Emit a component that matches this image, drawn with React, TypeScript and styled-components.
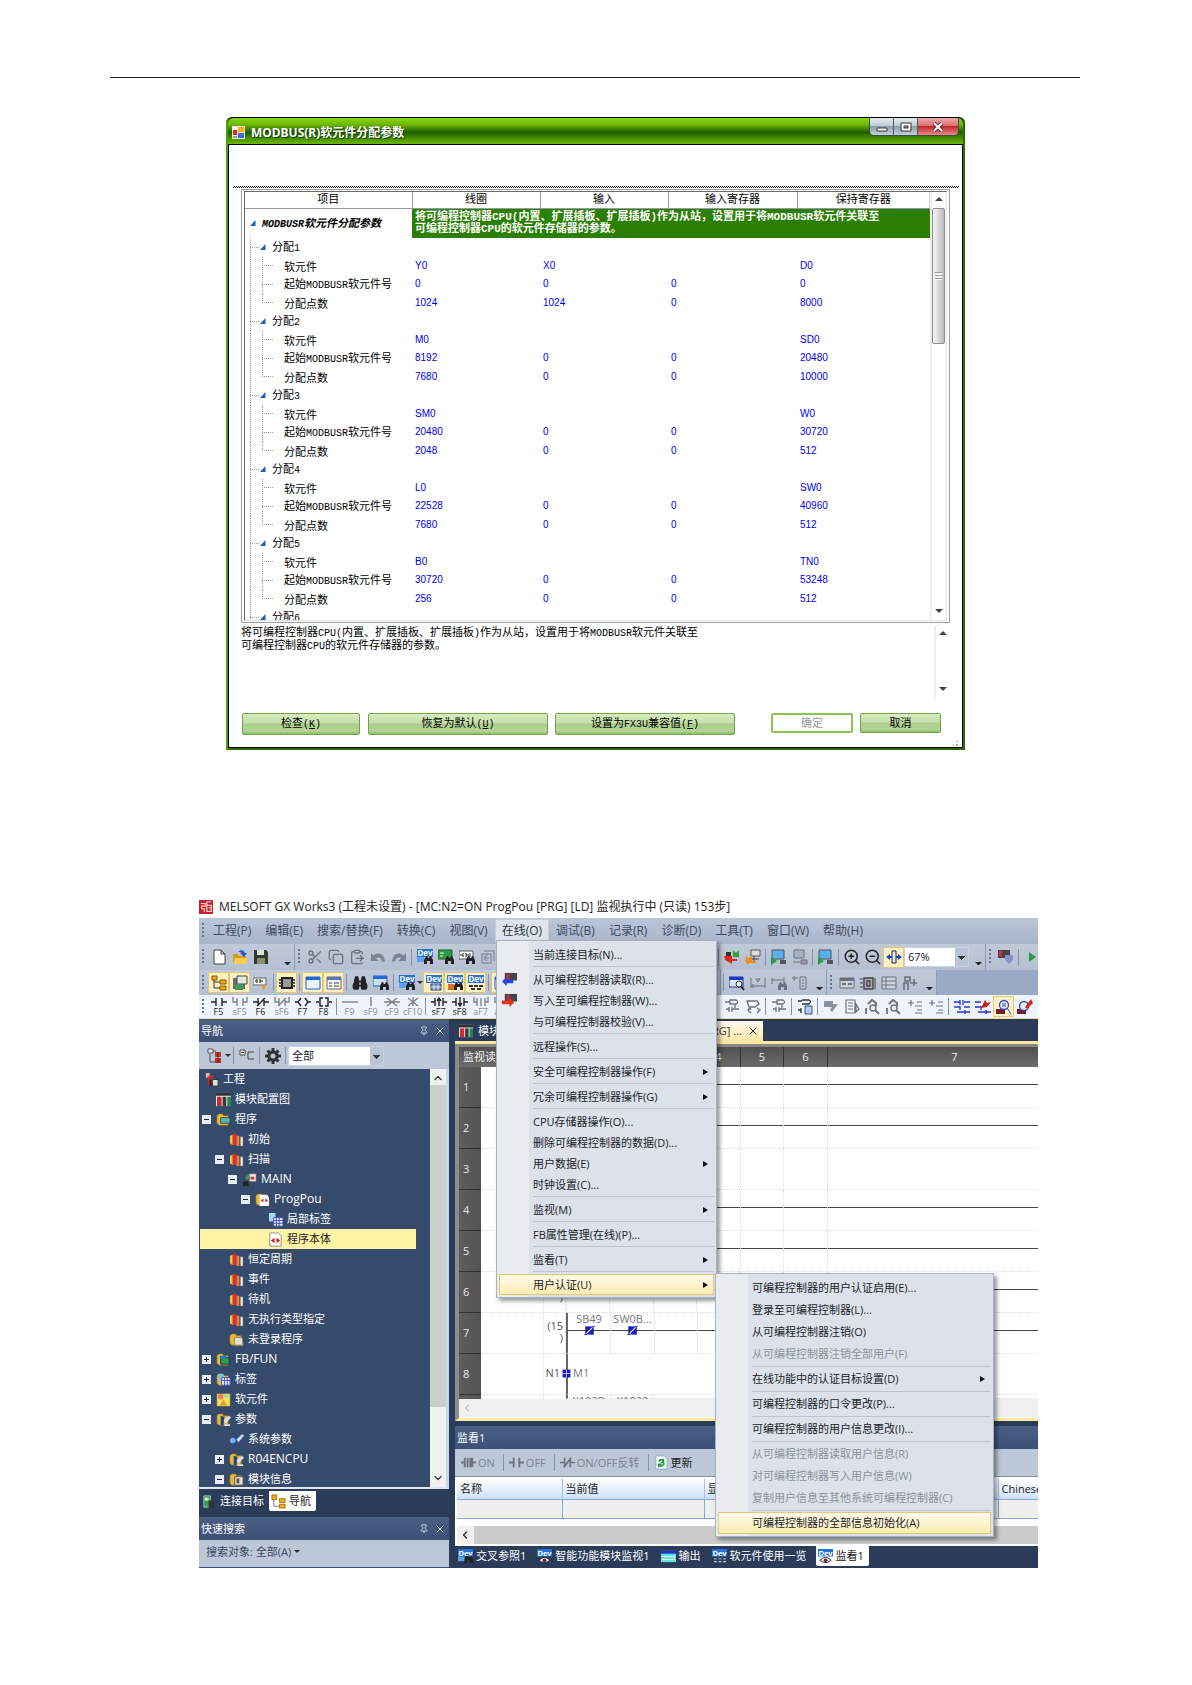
import React from "react";
import styled, { createGlobalStyle, css } from "styled-components";
import { Scissors, Copy, ClipboardPaste, ZoomIn, ZoomOut, Pin, X, Binoculars, ChevronUp, ChevronDown, ChevronLeft } from "lucide-react";

const Global = createGlobalStyle`
  *, *::before, *::after { box-sizing: border-box; }
  body { margin: 0; background: #fff; font-family: "Open Sans", "Noto Sans CJK SC", sans-serif; }
  button, input, select { font: inherit; color: inherit; margin: 0; }
  button { padding: 0; border: 0; background: none; }
  svg { display: block; flex: none; }
`;

const Page = styled.main`
  padding: 77px 112px 116px 110px;
`;
const Rule = styled.hr`
  margin: 0 0 39px;
  border: 0;
  border-top: 1px solid #222;
`;

/* ---------- MODBUS dialog ---------- */

const Dialog = styled.section`
  max-width: 739px;
  margin-left: 116px;
  padding: 1px 2px 2px;
  border-top: 1px solid #000;
  border-radius: 6px 6px 0 0;
  background: linear-gradient(90deg, #4fb400, #2c6a06 4px, #2c6a06);
  font: 11px/12px "Noto Sans CJK SC", sans-serif;
  color: #000;
`;
const TitleBar = styled.header`
  display: flex;
  align-items: center;
  height: 26px;
  margin-top: -1px;
  padding: 3px 0 0 4px;
  border-radius: 6px 6px 0 0;
  background: linear-gradient(#86d610, #6fb80a 25%, #2f7400 48%, #215c00 55%, #4a9404 80%, #6cb80c);
`;
const DialogTitle = styled.h1`
  flex: 1;
  margin: 0 0 0 6px;
  color: #fff;
  font: bold 12px/16px "Noto Sans", "Noto Sans CJK SC", sans-serif;
  text-shadow: 1px 1px 1px #123c00;
`;
const Caption = styled.div`
  display: flex;
  align-self: flex-start;
  height: 18px;
  margin: -3px 4px 0 0;
  border: 1px solid #3a4a4a;
  border-top: 0;
  border-radius: 0 0 5px 5px;
  overflow: hidden;
`;
const CaptionButton = styled.button<{ $close?: boolean }>`
  display: flex;
  align-items: center;
  justify-content: center;
  width: ${(p) => (p.$close ? 40 : 24)}px;
  border-right: ${(p) => (p.$close ? 0 : "1px solid #4a5a5a")};
  background: ${(p) =>
    p.$close
      ? "linear-gradient(#f0a8a8, #e07070 45%, #c02830 50%, #e88888)"
      : "linear-gradient(#e4ecf0, #c0ccd4 45%, #8c9ea8 50%, #c4d0d8)"};
`;
const DialogBody = styled.div`
  border: 1px solid #000;
  background: #fff;
  padding: 41px 3px 0 4px;
`;
const Checker = styled.div`
  height: 2px;
  background: repeating-conic-gradient(#000 0 25%, #fff 0 50%) 0 0 / 2px 2px;
`;
const Frame = styled.div`
  height: 434px;
  margin: 1px 9px 0 8px;
  padding: 1px 2px;
  border: 1px solid #9aa0a4;
`;
const FrameInner = styled.div`
  display: flex;
  height: 100%;
  overflow: hidden;
  border: 1px solid;
  border-color: #666 #e3e3e3 #e3e3e3 #666;
`;
const ParamTable = styled.table`
  flex: 1;
  align-self: flex-start;
  min-width: 0;
  table-layout: fixed;
  border-collapse: collapse;
  th, td { padding: 0; text-align: left; font-weight: normal; }
  thead th { height: 16px; padding-bottom: 3px; text-align: center; border-bottom: 1px solid #999; border-right: 1px solid #999; }
  thead th:last-child { border-right-color: #ddd; }
  td { padding-left: 3px; color: #0000f0; font: 10px/12px "Liberation Sans", sans-serif; }
`;
const Row = styled.tr<{ $h: number }>`
  height: ${(p) => p.$h}px;
`;
const Note = styled.td`
  && {
    height: 29px;
    background: #2b8003;
    color: #fff;
    font: bold 11px/12px "Liberation Mono", "Noto Sans CJK SC", monospace;
    white-space: pre;
  }
`;
const TreeCell = styled.div<{ $h: number }>`
  display: flex;
  align-items: center;
  height: ${(p) => p.$h}px;
  padding-left: 5px;
  white-space: nowrap;
`;
const Guide = styled.span<{ $w: number; $branch?: boolean; $end?: boolean }>`
  align-self: stretch;
  width: ${(p) => p.$w}px;
  margin-right: ${(p) => (p.$w === 11 ? 11 : 0)}px;
  background:
    repeating-linear-gradient(#999 0 1px, transparent 1px 2px) 0 0 / 1px ${(p) => (p.$end ? "50%" : "100%")} no-repeat,
    repeating-linear-gradient(90deg, #999 0 1px, transparent 1px 2px) 0 50% / ${(p) => (p.$branch ? "100%" : "0")} 1px no-repeat;
`;
const Lat = styled.span`
  font-family: "Liberation Mono", monospace;
  font-size: 10px;
  line-height: 1;
`;
const RootLabel = styled.span`
  margin-left: 6px;
  font-weight: bold;
  font-style: italic;
`;
const GroupLabel = styled.span`
  margin-left: 6px;
`;
const VScroll = styled.div`
  display: flex;
  flex-direction: column;
  align-items: center;
  width: 15px;
  margin-right: 1px;
  border-left: 2px solid #eee;
`;
const VArrow = styled.span<{ $up?: boolean }>`
  width: 0;
  border: 4px solid transparent;
  border-${(p) => (p.$up ? "bottom" : "top")}-color: #444;
  border-${(p) => (p.$up ? "top" : "bottom")}-width: 0;
  margin: 5px 0 7px;
`;
const VThumb = styled.span`
  display: flex;
  align-items: center;
  justify-content: center;
  width: 13px;
  height: 136px;
  border: 1px solid #8c8c8c;
  border-radius: 2px;
  background: linear-gradient(90deg, #f6f6f6, #ddd 45%, #b8b8be);
`;
const ThumbGrip = styled.span`
  width: 7px;
  height: 8px;
  background: repeating-linear-gradient(#999 0 1px, #fff 1px 3px);
`;
const Spring = styled.span`
  flex: 1;
`;
const Description = styled.div`
  display: flex;
  justify-content: space-between;
  height: 76px;
  padding: 3px 9px 1px 8px;
  line-height: 11px;
  p { margin: 0; }
`;
const DialogFooter = styled.footer`
  display: flex;
  height: 48px;
  padding: 14px 0 0 9px;
`;
const GreenButton = styled.button<{ $w: number; $short?: boolean; $gap: number }>`
  width: ${(p) => p.$w}px;
  height: ${(p) => (p.$short ? 20 : 22)}px;
  padding-bottom: 3px;
  margin-right: ${(p) => p.$gap}px;
  border: 1px solid #6fa84a;
  border-radius: 2px;
  background: linear-gradient(#d8ecc0, #c4dfaa 45%, #aacd8c 50%, #b4d498 85%, #8cbc68);
  &:disabled { border: 2px solid #8cc450; background: #fff; color: #999; }
`;
const SizeGrip = styled.span`
  align-self: flex-end;
  width: 8px;
  height: 8px;
  margin-left: auto;
  background: radial-gradient(#aaa 1px, transparent 1px) 0 0 / 4px 4px;
  clip-path: polygon(100% 0, 100% 100%, 0 100%);
`;

const groups = [
  ["1", ["Y0", "X0", "", "D0"], ["0", "0", "0", "0"], ["1024", "1024", "0", "8000"]],
  ["2", ["M0", "", "", "SD0"], ["8192", "0", "0", "20480"], ["7680", "0", "0", "10000"]],
  ["3", ["SM0", "", "", "W0"], ["20480", "0", "0", "30720"], ["2048", "0", "0", "512"]],
  ["4", ["L0", "", "", "SW0"], ["22528", "0", "0", "40960"], ["7680", "0", "0", "512"]],
  ["5", ["B0", "", "", "TN0"], ["30720", "0", "0", "53248"], ["256", "0", "0", "512"]],
] as [string, string[], string[], string[]][];
const childLabels = [<>软元件</>, <>起始<Lat>MODBUSR</Lat>软元件号</>, <>分配点数</>];

const Tri = () => (
  <svg width="6" height="6" viewBox="0 0 6 6"><path d="M5.5 0v6H0z" fill="#1d5fc4" /></svg>
);

function GroupRow({ n }: { n: string }) {
  return (
    <Row $h={19}>
      <th scope="rowgroup"><TreeCell $h={19}><Guide $w={10} $branch /><Tri /><GroupLabel>分配<Lat>{n}</Lat></GroupLabel></TreeCell></th>
      <td /><td /><td /><td />
    </Row>
  );
}

function ModbusDialog() {
  return (
    <Dialog aria-label="MODBUS(R)软元件分配参数">
      <TitleBar>
        <svg width="13" height="13" viewBox="0 0 13 13">
          <path d="M0 0h13v13H0z" fill="#e8e4d8" /><path d="M1 1h5v3H1z" fill="#fff" /><path d="M1 4h4v5H1z" fill="#d03020" />
          <path d="M6 1h6v5H6z" fill="#f0b020" /><path d="M6 7h6v5H6z" fill="#3a70d0" /><path d="M1 10h4v2H1z" fill="#999" />
        </svg>
        <DialogTitle>MODBUS(R)软元件分配参数</DialogTitle>
        <Caption>
          <CaptionButton aria-label="最小化"><svg width="12" height="10"><path d="M1 6h10v3H1z" fill="#fff" stroke="#333" /></svg></CaptionButton>
          <CaptionButton aria-label="最大化"><svg width="12" height="10"><path d="M1 1h10v8H1z" fill="#fff" stroke="#333" /><path d="M4 4h4v2H4z" fill="#9ab" stroke="#333" /></svg></CaptionButton>
          <CaptionButton $close aria-label="关闭"><svg width="12" height="10" viewBox="0 0 12 10"><path d="M2 1l8 8M10 1L2 9" stroke="#533" strokeWidth="4" /><path d="M2 1l8 8M10 1L2 9" stroke="#fff" strokeWidth="2" /></svg></CaptionButton>
        </Caption>
      </TitleBar>
      <DialogBody>
        <Checker />
        <Frame>
          <FrameInner>
            <ParamTable>
              <colgroup><col width="167" /><col width="128" /><col width="128" /><col width="129" /><col /></colgroup>
              <thead><tr><th>项目</th><th>线圈</th><th>输入</th><th>输入寄存器</th><th>保持寄存器</th></tr></thead>
              <tbody>
                <tr>
                  <th><TreeCell $h={29}><Tri /><RootLabel><Lat>MODBUSR</Lat>软元件分配参数</RootLabel></TreeCell></th>
                  <Note colSpan={4}>{"将可编程控制器CPU(内置、扩展插板、扩展插板)作为从站，设置用于将MODBUSR软元件关联至\n可编程控制器CPU的软元件存储器的参数。"}</Note>
                </tr>
                {groups.map(([n, ...rows]) => (
                  <React.Fragment key={n}>
                    <GroupRow n={n} />
                    {rows.map((cells, i) => {
                      const h = i === 1 ? 19 : 18;
                      return (
                        <Row key={i} $h={h}>
                          <th scope="row">
                            <TreeCell $h={h}><Guide $w={12} /><Guide $w={11} $branch $end={i === 2} /><span>{childLabels[i]}</span></TreeCell>
                          </th>
                          {cells.map((c, k) => <td key={k}>{c}</td>)}
                        </Row>
                      );
                    })}
                  </React.Fragment>
                ))}
                <GroupRow n="6" />
              </tbody>
            </ParamTable>
            <VScroll><VArrow $up /><VThumb><ThumbGrip /></VThumb><Spring /><VArrow /></VScroll>
          </FrameInner>
        </Frame>
        <Description>
          <p>将可编程控制器<Lat>CPU(</Lat>内置、扩展插板、扩展插板<Lat>)</Lat>作为从站，设置用于将<Lat>MODBUSR</Lat>软元件关联至<br />可编程控制器<Lat>CPU</Lat>的软元件存储器的参数。</p>
          <VScroll><VArrow $up /><Spring /><VArrow /></VScroll>
        </Description>
        <DialogFooter>
          <GreenButton $w={118} $gap={8}>检查<Lat>(<u>K</u>)</Lat></GreenButton>
          <GreenButton $w={180} $gap={7}>恢复为默认<Lat>(<u>U</u>)</Lat></GreenButton>
          <GreenButton $w={180} $gap={36}>设置为<Lat>FX3U</Lat>兼容值<Lat>(<u>F</u>)</Lat></GreenButton>
          <GreenButton $w={82} $gap={7} $short disabled>确定</GreenButton>
          <GreenButton $w={81} $gap={0} $short>取消</GreenButton>
          <SizeGrip />
        </DialogFooter>
      </DialogBody>
    </Dialog>
  );
}

/* ---------- GX Works3 icons ---------- */

const G = "#6c7280";
const DevTag = ({ children, c = "#2474d8" }: { children?: React.ReactNode; c?: string }) => (
  <>
    <path d="M0 0h16v8H0z" fill={c} />
    <text x="8" y="7" textAnchor="middle" fontSize="8" fontWeight="bold" fill="#fff">Dev</text>
    {children}
  </>
);
const Bino = ({ c = "#222" }: { c?: string }) => (
  <path d="M7 15v-4l2-4h1l1 2h1l1-2h1l2 4v4h-3v-3h-3v3z" fill={c} />
);
const Folder = ({ children }: { children?: React.ReactNode }) => (
  <><path d="M1 4l2-2h4l1 2h5v10H3L1 12z" fill="#e8b93c" stroke="#9a7420" strokeWidth=".6" />{children}</>
);

const art: Record<string, React.ReactNode> = {
  app: <><path d="M0 0h16v16H0z" fill="#c8202c" /><path d="M2 4h5v3H3v3h3v4M9 2h5M9 6h5v7H9V2M11 9h2" stroke="#f6dada" strokeWidth="1.3" fill="none" /></>,
  page: <path d="M3 1h7l4 4v10H3zM10 1v4h4" fill="#fff" stroke="#444" />,
  open: <><path d="M1 5h5l1 2h7v7H1z" fill="#d89a18" /><path d="M3 9h13l-2 6H1z" fill="#f8cc50" /><path d="M6 3c3-3 6-2 7 1h2l-3 4-4-4h2c-1-1-2-1-4-1z" fill="#2458c8" /></>,
  save: <><path d="M1 1h12l2 2v12H1z" fill="#333a30" /><path d="M4 1h7v5H4z" fill="#e0e4d8" /><path d="M4 9h8v6H4z" fill="#888e70" /></>,
  undo: <path d="M1 4v8h8L6 9.500q4-3 6 3l3 0q-1-9-8-8-2 .4-3.500 2z" fill="#7c8494" />,
  redo: <path d="M15 4v8H7l3-2.500q-4-3-6 3l-3 0q1-9 8-8 2 .4 3.500 2z" fill="#7c8494" />,
  gear: (
    <>
      <path d="M8 0v16M0 8h16M2.500 2.500l11 11M13.500 2.500l-11 11" stroke="#333" strokeWidth="3" />
      <circle cx="8" cy="8" r="4" fill="#bcc7d8" stroke="#333" strokeWidth="3" />
    </>
  ),
  devfind: <DevTag><path d="M0 8h7v5H0z" fill="#5aa4f0" /><Bino /></DevTag>,
  greenfind: <><path d="M0 1h14v9H0z" fill="#2e9c44" stroke="#185c28" /><path d="M2 4h4M2 7h3" stroke="#dfd" /><Bino /></>,
  ladfind: <><path d="M0 2h14v8H0z" fill="#fff" stroke="#555" /><path d="M1 6h3M4 4v4M7 4v4M7 6h3M11 4v4" stroke="#222" /><Bino /></>,
  greyback: <path d="M4 2h10v10M2 5h9v9H2zM4 9h5M4 9l3-3M4 9l3 3" fill="none" stroke="#8c94a4" strokeWidth="1.5" />,
  swap: <><path d="M0 7h8v3l5-0v2H8v3L1 11z" fill="#e02818" /><path d="M2 3h5v4H2z" fill="#333" /><path d="M9 1l3 3 3-3v7H9z" fill="#30a830" /></>,
  orange: <><path d="M6 1h9v6H6z" fill="#d8dce4" stroke="#555" /><path d="M7 10h7M9 7v6" stroke="#444" /><path d="M1 7l2 2 4-2v5l4 0v2H4l-1 2-3-4z" fill="#f09020" /></>,
  monplay: <><path d="M1 1h12v9H1z" fill="#58b0f0" stroke="#555" /><path d="M0 8l6 4-6 4z" fill="#20a040" /><path d="M9 11h6v4H9z" fill="#555" /></>,
  mongrey: <><path d="M2 1h10v8H2z" fill="#aab2c0" stroke={G} /><path d="M1 13h7M9 11h6v4H9z" stroke={G} fill="#99a" /></>,
  fit: <><path d="M6 2h4v12H6z" fill="#e8ecf4" stroke="#222" /><path d="M0 8l4-3v2h2v2H4v2zM16 8l-4-3v2h-2v2h2v2z" fill="#1848c8" /></>,
  plc: <><path d="M0 1h12v8H0z" fill="#444" /><path d="M1 2h3v6H1z" fill="#d02840" /><path d="M7 6h8v5l-4 4-4-4z" fill="#8890d0" /></>,
  play: <path d="M5 3l7 5-7 5z" fill="#2c9a3c" />,
  treeico: <><path d="M1 1h5v4H1zM9 5h6v4H9zM9 11h6v4H9z" fill="#f0a818" stroke="#8a5a08" /><path d="M3 5v8h6M3 7h6" fill="none" stroke="#333" /></>,
  disk2: <><path d="M1 3h12v11H1z" fill="#667068" /><path d="M5 1h10v8H5z" fill="#e0e8e0" stroke="#444" /><path d="M3 9h8v6H3z" fill="#40985a" /></>,
  cards: <><path d="M0 3h13v7H0z" fill="#f2f2e8" stroke="#666" /><path d="M2 6h2M4 4v4M7 4v4M7 6h3" stroke="#222" /><path d="M8 9l5 3-3 3z" fill="#d8a020" /></>,
  chip: <><path d="M3 3h10v10H3z" fill="#999" stroke="#222" strokeWidth="2" /><path d="M0 5h3M0 8h3M0 11h3M13 5h3M13 8h3M13 11h3" stroke="#222" strokeWidth="1.4" /></>,
  win: <><path d="M1 2h14v12H1z" fill="#e8f4ff" stroke="#2060c0" /><path d="M1 2h14v3H1z" fill="#2468d8" /></>,
  win2: <><path d="M1 2h14v12H1z" fill="#f4f4f4" stroke="#666" /><path d="M1 2h14v3H1z" fill="#5a78b8" /><path d="M3 8h3M8 8h5M3 11h3M8 11h5" stroke="#445" /></>,
  winfind: <><path d="M0 1h14v10H0z" fill="#cde" stroke="#35a" /><path d="M0 1h14v3H0z" fill="#2468d8" /><Bino /></>,
  devgrid: <DevTag><path d="M5 9h10v6H5z" fill="#7898c8" stroke="#345" /><path d="M8 9v6M12 9v6M5 12h10" stroke="#fff" strokeWidth=".7" /></DevTag>,
  devred: <DevTag><path d="M1 9h6v6H1z" fill="#e07020" /><Bino /></DevTag>,
  devblk: <DevTag><path d="M1 10h4v2H1zM6 10h4v2H6zM11 10h4v2h-4zM3 13h4v2H3zM9 13h4v2H9z" fill="#333" /></DevTag>,
  deveye: <DevTag><path d="M2 12q6-6 12 0q-6 5-12 0z" fill="#fff" stroke="#222" /><circle cx="8" cy="12" r="2" fill="#722" /></DevTag>,
  devdots: <DevTag><path d="M2 10h3v1H2zM7 10h3v1H7zM12 10h3v1h-3zM2 13h3v1H2zM7 13h3v1H7zM12 13h3v1h-3z" fill="#eee" /></DevTag>,
  bluesearch: <><path d="M0 2h14v10H0z" fill="#dde6f8" stroke="#1830b0" /><path d="M0 2h14v3H0z" fill="#1838d0" /><circle cx="10" cy="9" r="3" fill="#fff" stroke="#222" /><path d="M12 11l3 4" stroke="#222" strokeWidth="2" /></>,
  g1: <path d="M1 3v10M15 3v10M1 11h14M6 4h4l-2 3zM3 9v4" fill="none" stroke={G} />,
  g2: <><path d="M1 3v6M13 2v6M1 5h12" fill="none" stroke={G} /><Bino c={G} /></>,
  g3: <path d="M0 3h6M2 1v5M8 2h6v12H8zM10 5h2M10 8h2M10 11h2" fill="none" stroke={G} />,
  g4: <><path d="M1 3h14v10H1z" fill="#ccd2dc" stroke={G} /><path d="M1 3h14v3H1zM3 8h4v2H3zM9 8h4v2H9z" fill={G} /></>,
  g5: <><path d="M0 4h3M0 8h3M0 12h3M15 3v11" fill="none" stroke="#444" /><path d="M4 3h9v11H4zM7 6h3v5H7z" fill="#aab" stroke="#444" strokeWidth="1.4" /></>,
  g6: <path d="M1 2h14v12H1zM1 6h14M1 10h14M5 2v12" fill="#ccd2dc" stroke={G} />,
  g7: <path d="M3 2h5v4H3zM2 15V8h4v7M8 8h7M12 4v7" fill="none" stroke={G} strokeWidth="1.6" />,
  l1: <path d="M1 3h5M6 1h6q3 2 0 4H6zM2 10h3M5 8v5M8 8v5M8 10h7M11 6v3" fill="none" stroke={G} strokeWidth="1.3" />,
  l2: <path d="M2 2h10l2 3-4 3H4zM3 10h3M12 9l3 2-3 3M6 9l-3 2 3 3" fill="none" stroke={G} strokeWidth="1.3" />,
  l3: <><path d="M1 2h4M5 1h7q3 1 0 4H5M1 11h3M4 9v5" fill="none" stroke="#333" strokeWidth="1.3" /><path d="M8 7h7v8H8z" fill="#b8c8e8" stroke="#357" /></>,
  l4: <path d="M1 2h9v3h5l-6 8-2-2 2-3H1z" fill="#8a90a0" />,
  l5: <path d="M2 1h9v13H2zM4 4h5M4 7h5M4 10h5M12 5v8l3-3z" fill="none" stroke={G} strokeWidth="1.2" />,
  l6: <><path d="M3 5l4-4 4 3v3" fill="none" stroke={G} strokeWidth="2" /><circle cx="8" cy="9" r="3" fill="none" stroke={G} strokeWidth="1.5" /><path d="M10 11l4 4M1 9v6" stroke={G} strokeWidth="1.8" /></>,
  l7: <path d="M4 1v6M1 4h6M10 3h5M8 7h7M10 11h5M8 14h7" fill="none" stroke={G} strokeWidth="1.2" />,
  b1: <path d="M0 3h6M0 8h6M10 3h6M6 1v5M9 1v5M6 7v4M10 8h6M3 13h5M11 11v4M8 13h8" fill="none" stroke="#2038d8" strokeWidth="1.3" />,
  b2: <><path d="M0 3h6M0 8h6M3 13h5M11 11v4M8 13h8M6 7v4" fill="none" stroke="#2038d8" strokeWidth="1.3" /><path d="M6 9l4-8 2 3 4-1-4 5z" fill="#c02818" /></>,
  b3: <><path d="M0 10h9v5H0z" fill="#702020" /><circle cx="8" cy="6" r="4.5" fill="#e4ecff" stroke="#3448c0" strokeWidth="1.3" /><path d="M11 9l4 6M6 5h4M6 7h4" stroke="#3448c0" /></>,
  b4: <><path d="M0 10h9v5H0z" fill="#702020" /><circle cx="7" cy="7" r="4.5" fill="#e4ecff" stroke="#3448c0" strokeWidth="1.3" /><path d="M8 8l6-8 2 4-6 6z" fill="#d02818" /></>,
  filt: <><path d="M1 1h5v4H1z" fill="#eee" stroke="#555" /><path d="M3 6v8h5M6 3h3" stroke="#555" fill="none" /><path d="M8 4h6v5H8zM8 10h6v5H8z" fill="#c83020" /><path d="M11 4v11" stroke="#333" /></>,
  coll: <><path d="M1 2h5v5H1z" fill="#fff" stroke="#444" /><path d="M2 4.500h3M15 4H9v7h6" stroke="#444" fill="none" /></>,
  proj: <><path d="M2 1h4v5H2z" fill="#e4b0a0" /><path d="M4 5l6-2v9l-6 2z" fill="#b83030" /><path d="M9 8h6v7H9z" fill="#ddd" stroke="#333" /><path d="M6 8h2v7H6z" fill="#222" /></>,
  module: <><path d="M0 1h16v14H0z" fill="#eee" /><path d="M0 1h16v3H0z" fill="#333" /><path d="M1 5h5v10H1z" fill="#c82c38" /><path d="M7 5h4v10H7z" fill="#3a3a3a" /><path d="M12 5h4v10h-4z" fill="#208848" /></>,
  prog: <Folder><path d="M5 6h10v6H5z" fill="#58b8b0" stroke="#234" strokeWidth=".8" /></Folder>,
  books: <><path d="M1 4l3-1v11l-3-2z" fill="#f0c040" /><path d="M4 2h4v12H4z" fill="#d83028" /><path d="M8 4h3v11H8z" fill="#f08040" /><path d="M12 5h3v10h-3z" fill="#f4f0e8" stroke="#555" strokeWidth=".6" /></>,
  main: <><path d="M1 10h6v5H1z" fill="#222" /><path d="M3 6l4-4 2 3-3 4z" fill="#2c9c58" /><path d="M8 2h7v8H8z" fill="#f6eaea" stroke="#876" strokeWidth=".6" /><path d="M9 5h4v3H9z" fill="#d03030" /></>,
  pou: <Folder><path d="M5 3h8l2 3v9H5z" fill="#fff" /><path d="M6 9l3-2v4zM14 9l-3-2v4z" fill="#d02020" /></Folder>,
  label: <><path d="M1 1h7v9H1z" fill="#a8d8f0" /><path d="M6 6h10v9H6z" fill="#f0f0ff" stroke="#3c50c8" /><path d="M6 9h10M6 12h10M9 6v9M12 6v9" stroke="#3c50c8" /></>,
  body: <><path d="M2 1h9l3 3v11H2z" fill="#fff" stroke="#666" strokeWidth=".7" /><path d="M3 9l4-3v6zM13 9l-4-3v6z" fill="#d02020" /></>,
  unreg: <Folder><path d="M6 6h8l1 8H6z" fill="#e8e4c8" stroke="#887" /></Folder>,
  fb: <Folder><path d="M5 6h9v7H5z" fill="#28a048" stroke="#135" /><path d="M4 4h7v3H4z" fill="#2c70d0" /></Folder>,
  labels: <Folder><path d="M2 2h6v7H2z" fill="#7cc4e8" /><path d="M6 6h9v8H6z" fill="#eef" stroke="#3c50c8" /><path d="M6 9h9M9 6v8M12 6v8" stroke="#3c50c8" /></Folder>,
  device: <><path d="M1 2h14v13H1z" fill="#f4e060" stroke="#a08020" strokeWidth=".6" /><circle cx="5" cy="5" r="3" fill="#e88068" /><circle cx="11" cy="4" r="2.5" fill="#b0d890" /><path d="M4 14l4-6 4 6z" fill="#e0a030" /></>,
  param: <Folder><path d="M5 4l4 1-1 9H5z" fill="#1c4880" /><path d="M8 9l6-5 2 2-6 6zM9 13h6v2H9z" fill="#d8e0f0" /></Folder>,
  sysparam: <><path d="M5 3l5 2-2 10H4z" fill="#204a90" /><path d="M8 8l6-6 2 2-6 7z" fill="#c8d8f8" /><circle cx="4" cy="9" r="3" fill="#7ab0e8" /></>,
  modinfo: <Folder><path d="M6 5h9v9H6z" fill="#e4dccc" stroke="#554" /><path d="M8 7h3v5H8z" fill="#555" /></Folder>,
  conn: <><path d="M2 2h7v12H2z" fill="#389858" stroke="#9cb" /><path d="M7 7h6v8H7z" fill="#333" /><path d="M3 4h4v3H3z" fill="#dfd" /></>,
  navtree: <><path d="M1 1h5v5H1zM9 5h6v4H9zM9 11h6v4H9z" fill="#f0b020" stroke="#a87408" /><path d="M3 6v7h6" fill="none" stroke="#777" /></>,
  mread: <><path d="M3 1h13v8H3z" fill="#444" /><path d="M5 2h3v6H5z" fill="#c03040" /><path d="M0 10l5-5v3h7v4H5v3z" fill="#2048e0" /></>,
  mwrite: <><path d="M3 1h13v8H3z" fill="#444" /><path d="M5 2h3v6H5z" fill="#c03040" /><path d="M13 10L8 5v3H0v4h8v3z" fill="#e83020" /></>,
  con: <path d="M0 8h3M13 8h3M4 3v10M7 3v10M10 3v10M12 3v10" stroke={G} strokeWidth="2" />,
  coff: <path d="M0 8h5M11 8h5M5 3v10M11 3v10" stroke={G} strokeWidth="2" />,
  cinv: <path d="M0 8h4M12 8h4M5 3v10M11 3v10M4 13L12 3" stroke={G} strokeWidth="1.8" />,
  refresh: <><path d="M2 1h9l3 3v11H2z" fill="#fff" stroke="#8ac" /><path d="M5 7q3-4 5 0M11 9q-3 5-6 1M10 4v4H7M5 13v-3h3" fill="none" stroke="#18a038" strokeWidth="1.8" /></>,
  output: <><path d="M0 2h16v12H0z" fill="#68e0e0" /><path d="M0 2h16v3H0z" fill="#2030c8" /><path d="M1 8h14M1 11h14" stroke="#fff" /></>,
  contact: <><path d="M2 2h12v12H2z" fill="#1818d0" /><path d="M3 13L13 3" stroke="#fff" strokeWidth="1.6" /><path d="M0 14h4M12 2h4M3 2v12M13 2v12" stroke="#223" /></>,
  coilbox: <><path d="M1 1h14v14H1z" fill="#1818c8" /><path d="M8 1v14M1 8h14" stroke="#dde" strokeWidth="1.4" /></>,
};
const Icon = ({ n, s = 15 }: { n: string; s?: number }) => (
  <svg width={s} height={s} viewBox="0 0 16 16" aria-hidden="true">{art[n]}</svg>
);

/* Ladder instruction symbols, 16x9 */
const lad: Record<string, string> = {
  no: "M0 5h5M11 5h5M5 1v8M11 1v8",
  or: "M1 0v5h4M15 0v5h-4M5 1v8M11 1v8",
  nc: "M0 5h5M11 5h5M5 1v8M11 1v8M4 9l8-8",
  ornc: "M1 0v5h4M15 0v5h-4M5 1v8M11 1v8M4 9l8-8",
  coil: "M0 5h3M13 5h3M6 1L3 5l3 4M10 1l3 4-3 4",
  app: "M0 5h3M13 5h3M7 1H4v8h3M9 1h3v8H9",
  h: "M0 5h16",
  v: "M8 0v9",
  xh: "M0 5h16M3 1l10 8M13 1L3 9",
  xv: "M8 0v9M3 1l10 8M13 1L3 9",
  up: "M0 5h4M12 5h4M4 1v8M12 1v8M8 9V1M6 4l2-3 2 3",
  dn: "M0 5h4M12 5h4M4 1v8M12 1v8M8 0v8M6 6l2 3 2-3",
  orup: "M1 0v5h3M15 0v5h-3M4 1v8M12 1v8M8 9V1",
};

/* ---------- GX Works3 window ---------- */

const Works = styled.section`
  position: relative;
  max-width: 839px;
  margin: 145px 0 0 89px;
  overflow: hidden;
  font-size: 11px;
  line-height: 16px;
  color: #1b2333;
  white-space: nowrap;
`;
const WorksTitle = styled.header`
  display: flex;
  align-items: center;
  gap: 6px;
  height: 23px;
  padding-top: 1px;
  font-size: 12px;
  color: #222;
`;
const MenuBar = styled.nav`
  display: flex;
  align-items: center;
  height: 26px;
  padding: 2px 0;
  background: linear-gradient(#bcc6d8, #a8b4ca);
  font-size: 12px;
  color: #3f4a60;
`;
const MenuBarItem = styled.button<{ $open?: boolean }>`
  height: 24px;
  padding: 0 7px;
  ${(p) => p.$open && css`background: #dfe4ec; box-shadow: inset 0 0 0 1px #c6cede; color: #2a3242;`}
`;
const Grip = styled.span`
  flex: none;
  width: 2px;
  height: 16px;
  margin: 0 4px 0 3px;
  background: repeating-linear-gradient(#66728a 0 2px, transparent 2px 4px);
`;
const MenuGrip = styled(Grip)`
  margin-right: 2px;
`;
const ToolRow = styled.div<{ $h: number; $light?: boolean }>`
  display: flex;
  height: ${(p) => p.$h}px;
  background: ${(p) => (p.$light ? "#eff3fc" : "#9baac4")};
  border-bottom: ${(p) => (p.$light ? "1px solid #e8dcae" : "0")};
`;
const ToolGroup = styled.div<{ $w?: number; $light?: boolean }>`
  display: flex;
  flex: none;
  align-items: center;
  ${(p) => p.$w && css`width: ${p.$w}px;`}
  background: ${(p) => (p.$light ? "none" : "linear-gradient(#c0cad9, #b4bfd1)")};
  border-right: ${(p) => (p.$light ? 0 : 1)}px solid #8e9cb6;
  overflow: hidden;
`;
const Tool = styled.button<{ $on?: boolean }>`
  display: flex;
  flex: none;
  flex-direction: column;
  align-items: center;
  justify-content: center;
  width: 21px;
  height: 21px;
  color: ${G};
  ${(p) => p.$on && css`background: #fdf0c4; box-shadow: inset 0 0 0 1px #e4c878;`}
`;
const KeyTool = styled(Tool)<{ $dim?: boolean }>`
  height: 23px;
  font-size: 9px;
  line-height: 10px;
  color: ${(p) => (p.$dim ? "#8a90a0" : "#222")};
`;
const Sep = styled.span`
  flex: none;
  width: 1px;
  height: 17px;
  margin: 0 2px;
  background: #8592aa;
`;
const More = styled.span`
  align-self: flex-end;
  width: 7px;
  margin: 0 3px 5px 6px;
  border: 3px solid transparent;
  border-top-color: #222;
  border-bottom: 0;
`;
const Combo = styled.select<{ $w: number }>`
  appearance: none;
  width: ${(p) => p.$w}px;
  height: 20px;
  padding: 0 3px;
  border: 1px solid #c8d0e0;
  border-radius: 0;
  background:
    linear-gradient(#333, #333) right 3px top 8px / 7px 1px no-repeat,
    linear-gradient(#333, #333) right 4px top 9px / 5px 1px no-repeat,
    linear-gradient(#333, #333) right 5px top 10px / 3px 1px no-repeat,
    linear-gradient(#333, #333) right 6px top 11px / 1px 1px no-repeat,
    linear-gradient(#b8c4d8, #b8c4d8) right / 13px 100% no-repeat,
    #fff;
`;
const Docks = styled.div`
  display: grid;
  grid-template-columns: 250px minmax(0, 1fr);
  column-gap: 6px;
  height: 549px;
  background: #2b3c5b;
`;
const Column = styled.div`
  display: flex;
  flex-direction: column;
  min-width: 0;
`;
const PanelHead = styled.header`
  display: flex;
  flex: none;
  align-items: center;
  gap: 5px;
  height: 23px;
  padding: 0 3px 0 2px;
  background: linear-gradient(#4c6084, #3c5078);
  color: #fff;
  svg { color: #dde4f0; }
`;
const PanelTitle = styled.h2`
  flex: 1;
  margin: 0;
  font-size: 11px;
  font-weight: normal;
`;
const PanelTools = styled.div`
  display: flex;
  flex: none;
  align-items: center;
  height: 27px;
  padding-left: 5px;
  background: #bcc7d8;
`;
const TreeBox = styled.div`
  display: flex;
  flex: none;
  height: 420px;
  padding-left: 1px;
  border-right: 3px solid #c4d8f4;
  border-bottom: 2px solid #dce6f6;
  background: #364b6c;
  overflow: hidden;
`;
const TreeList = styled.ul`
  flex: 1;
  margin: 0 14px 0 0;
  padding: 0;
  list-style: none;
  color: #fff;
`;
const TreeItem = styled.li<{ $level: number; $sel?: boolean }>`
  display: flex;
  align-items: center;
  height: 20px;
  padding-left: ${(p) => (p.$level ? p.$level * 13 - 11 : 4)}px;
  ${(p) => p.$sel && css`background: #fff3a4; color: #222;`}
`;
const Expander = styled.span<{ $show: boolean }>`
  display: flex;
  width: 9px;
  height: 9px;
  margin-right: 5px;
  visibility: ${(p) => (p.$show ? "visible" : "hidden")};
`;
const NodeText = styled.span<{ $latin?: boolean }>`
  margin-left: 4px;
  font-size: ${(p) => (p.$latin ? 12 : 11)}px;
`;
const SideScroll = styled.div`
  display: flex;
  flex-direction: column;
  justify-content: space-between;
  width: 16px;
  background: linear-gradient(#f0f0f0 16px, #cdcdcd 16px, #cdcdcd 338px, #f0f0f0 338px);
  color: #444;
  padding: 3px 2px;
`;
const TabStrip = styled.div`
  display: flex;
  flex: none;
  height: 28px;
  padding: 2px 0 5px 1px;
`;
const Tab = styled.button<{ $active?: boolean }>`
  display: flex;
  align-items: center;
  gap: 3px;
  height: 20px;
  padding: 0 5px 0 2px;
  color: ${(p) => (p.$active ? "#222" : "#fff")};
  background: ${(p) => (p.$active ? "#fff" : "none")};
  border-radius: 0 0 2px 2px;
`;
const SearchTarget = styled.button`
  flex: 1;
  display: flex;
  align-items: center;
  gap: 3px;
  padding: 0 7px 4px;
  background: #bcc7d8;
  border-bottom: 1px solid #3c5078;
  color: #3c4860;
`;
const Caret = styled.span`
  border: 3px solid transparent;
  border-top-color: #333;
  border-bottom: 0;
`;
const DocTabs = styled.div`
  display: flex;
  flex: none;
  height: 25px;
  padding-top: 2px;
  border-bottom: 3px solid #fbe6a2;
`;
const DocTab = styled.button<{ $active?: boolean; $w: number }>`
  display: flex;
  align-items: center;
  justify-content: ${(p) => (p.$active ? "flex-end" : "flex-start")};
  gap: 5px;
  width: ${(p) => p.$w}px;
  padding: 0 4px;
  overflow: hidden;
  color: ${(p) => (p.$active ? "#333" : "#fff")};
  background: ${(p) => (p.$active ? "linear-gradient(#fffaf0, #fbe8a8)" : "none")};
`;
const Editor = styled.div`
  flex: none;
  height: 377px;
  padding: 3px 0 0;
  border-left: 4px solid #8c8c8c;
  border-bottom: 3px solid #fbe6a2;
  background: #fff;
  display: flex;
  flex-direction: column;
  box-shadow: inset 0 3px #8a8880;
`;
const GridHead = styled.div`
  display: flex;
  flex: none;
  height: 20px;
  line-height: 20px;
  background: linear-gradient(#505050, #6c6c6c);
  color: #f0f0f0;
`;
const HeadCell = styled.span<{ $w: number; $start?: boolean }>`
  flex: none;
  width: ${(p) => p.$w}px;
  padding-left: ${(p) => (p.$start ? 4 : 0)}px;
  border-right: 1px solid #333;
  text-align: ${(p) => (p.$start ? "left" : "center")};
`;
const LadderRow = styled.div<{ $part?: boolean }>`
  display: flex;
  flex: none;
  height: ${(p) => (p.$part ? 4 : 41)}px;
  overflow: hidden;
`;
const RowNo = styled.span`
  flex: none;
  width: 22px;
  padding: 12px 0 0 4px;
  border-bottom: 1px solid #333;
  background: linear-gradient(90deg, #5c5c5c, #555);
  color: #e8e8e8;
`;
const StepCell = styled.span<{ $w: number; $mid?: boolean }>`
  flex: none;
  width: ${(p) => p.$w}px;
  padding: ${(p) => (p.$mid ? 13 : 7)}px ${(p) => (p.$mid ? 6 : 2)}px 0 0;
  border-right: 1px ${(p) => (p.$mid ? "none" : "dotted")} #ddd;
  border-bottom: 1px dotted #ddd;
  line-height: 12px;
  text-align: right;
  direction: ltr;
  color: #555;
`;
const Rung = styled.div<{ $line?: boolean; $rail?: boolean }>`
  display: flex;
  flex: 1;
  border-left: ${(p) => (p.$rail ? "2px solid #666" : "1px dotted #ddd")};
  border-bottom: 1px dotted #ddd;
  ${(p) => p.$line && css`background: linear-gradient(#444, #444) 0 17px / 100% 1px no-repeat;`}
`;
const Cell = styled.span`
  display: flex;
  flex: none;
  flex-direction: column;
  align-items: center;
  width: 44px;
  border-right: 1px dotted #ddd;
  line-height: 12px;
  color: #777;
  &:nth-child(odd) { width: 43px; }
`;
const Coil = styled.span`
  display: flex;
  align-items: center;
  gap: 2px;
  height: 38px;
  margin-left: -6px;
  color: #777;
`;
const HScroll = styled.div<{ $thumb?: boolean }>`
  display: flex;
  flex: none;
  align-items: center;
  height: 18px;
  padding-left: 2px;
  color: ${(p) => (p.$thumb ? "#333" : "#aaa")};
  background: ${(p) => (p.$thumb ? "linear-gradient(90deg, #f0f0f0 17px, #cbcbcb 17px)" : "#f0f0f0")};
`;
const WatchTool = styled.button<{ $on?: boolean }>`
  display: flex;
  align-items: center;
  gap: 2px;
  padding: 0 6px 0 3px;
  color: ${(p) => (p.$on ? "#222" : "#7c8494")};
`;
const WatchTools = styled(PanelTools)`
  padding-left: 3px;
`;
const WatchBox = styled.div`
  height: 70px;
  padding: 2px 0 0 2px;
  background: #fff;
  border-top: 1px solid #8890a0;
  border-bottom: 2px solid #fff;
  overflow: hidden;
`;
const WatchTable = styled.table`
  width: 750px;
  margin-bottom: 7px;
  table-layout: fixed;
  border-collapse: collapse;
  th { height: 20px; padding: 0 3px; text-align: left; font-weight: normal; background: linear-gradient(#fff, #cde0fa); border-right: 1px solid #a8c0e8; border-bottom: 1px solid #88a8d8; color: #222; }
  td { height: 19px; background: #efefef; border-right: 1px solid #88a8d8; border-bottom: 1px solid #88a8d8; }
`;
const BottomTabs = styled.div`
  display: flex;
  flex: 1;
  align-items: flex-start;
  gap: 4px;
  padding: 0 0 0 1px;
`;

const Menu = styled.ul<{ $x: number; $y: number; $w: number }>`
  position: absolute;
  left: ${(p) => p.$x}px;
  top: ${(p) => p.$y}px;
  width: ${(p) => p.$w}px;
  margin: 0;
  padding: 3px 2px 2px;
  list-style: none;
  border: 1px solid #a8b2c4;
  background: linear-gradient(90deg, #e8ecef 32px, #dce1ea 32px);
  box-shadow: 3px 3px 4px rgba(0, 0, 0, 0.4);
  color: #1a1e28;
`;
const MenuLine = styled.li<{ $loose: boolean }>`
  height: 1px;
  margin: 1px 0 ${(p) => (p.$loose ? 2 : 1)}px 34px;
  background: #bcc4d2;
`;
const MenuEntry = styled.button<{ $h: number; $hot?: boolean }>`
  display: flex;
  align-items: center;
  width: 100%;
  height: ${(p) => p.$h}px;
  padding: 0 6px 0 3px;
  text-align: left;
  &:disabled { color: #8c929c; }
  ${(p) => p.$hot && css`background: linear-gradient(#fffaf0, #fdebb0); box-shadow: inset 0 0 0 1px #e4c878;`}
`;
const MenuIcon = styled.span`
  width: 31px;
`;
const SubArrow = styled.span`
  margin-left: auto;
  border: 3px solid transparent;
  border-left: 5px solid #111;
  border-right: 0;
`;

type Entry = { t: string; icon?: string; sub?: boolean; off?: boolean; hot?: boolean } | null;
const onlineMenu: Entry[] = [
  { t: "当前连接目标(N)..." }, null,
  { t: "从可编程控制器读取(R)...", icon: "mread" }, { t: "写入至可编程控制器(W)...", icon: "mwrite" }, { t: "与可编程控制器校验(V)..." }, null,
  { t: "远程操作(S)..." }, null,
  { t: "安全可编程控制器操作(F)", sub: true }, null,
  { t: "冗余可编程控制器操作(G)", sub: true }, null,
  { t: "CPU存储器操作(O)..." }, { t: "删除可编程控制器的数据(D)..." }, { t: "用户数据(E)", sub: true }, { t: "时钟设置(C)..." }, null,
  { t: "监视(M)", sub: true }, null,
  { t: "FB属性管理(在线)(P)..." }, null,
  { t: "监看(T)", sub: true }, null,
  { t: "用户认证(U)", sub: true, hot: true },
];
const authMenu: Entry[] = [
  { t: "可编程控制器的用户认证启用(E)..." }, { t: "登录至可编程控制器(L)..." }, { t: "从可编程控制器注销(O)" }, { t: "从可编程控制器注销全部用户(F)", off: true }, null,
  { t: "在线功能中的认证目标设置(D)", sub: true }, null,
  { t: "可编程控制器的口令更改(P)..." }, null,
  { t: "可编程控制器的用户信息更改(I)..." }, null,
  { t: "从可编程控制器读取用户信息(R)", off: true }, { t: "对可编程控制器写入用户信息(W)", off: true }, { t: "复制用户信息至其他系统可编程控制器(C)", off: true }, null,
  { t: "可编程控制器的全部信息初始化(A)", hot: true },
];

function PopupMenu({ items, x, y, w, rowH }: { items: Entry[]; x: number; y: number; w: number; rowH: number }) {
  return (
    <Menu $x={x} $y={y} $w={w}>
      {items.map((e, i) =>
        e ? (
          <li key={i}>
            <MenuEntry $h={rowH} $hot={e.hot} disabled={e.off}>
              <MenuIcon>{e.icon && <Icon n={e.icon} />}</MenuIcon>{e.t}{e.sub && <SubArrow />}
            </MenuEntry>
          </li>
        ) : <MenuLine key={i} $loose={rowH < 22} />
      )}
    </Menu>
  );
}

const tree: [number, string, string, string?][] = [
  [0, "proj", "工程"], [1, "module", "模块配置图"], [1, "prog", "程序", "-"], [2, "books", "初始"], [2, "books", "扫描", "-"],
  [3, "main", "MAIN", "-"], [4, "pou", "ProgPou", "-"], [5, "label", "局部标签"], [5, "body", "程序本体"],
  [2, "books", "恒定周期"], [2, "books", "事件"], [2, "books", "待机"], [2, "books", "无执行类型指定"], [2, "unreg", "未登录程序"],
  [1, "fb", "FB/FUN", "+"], [1, "labels", "标签", "+"], [1, "device", "软元件", "+"], [1, "param", "参数", "-"],
  [2, "sysparam", "系统参数"], [2, "param", "R04ENCPU", "+"], [2, "modinfo", "模块信息", "-"],
];

const lineIcons: Record<string, React.ReactNode> = {
  cut: <Scissors size={16} />, copy: <Copy size={16} />, paste: <ClipboardPaste size={16} />,
  zin: <ZoomIn size={18} color="#222" />, zout: <ZoomOut size={18} color="#222" />, bino: <Binoculars size={16} color="#222" fill="#222" />,
};

/* "|" is a separator, a leading "*" marks a pressed tool */
const tools = (list: string) =>
  list.split(" ").map((n, i) => {
    if (n === "|") return <Sep key={i} />;
    const on = n[0] === "*";
    const name = on ? n.slice(1) : n;
    return <Tool key={i} $on={on} aria-label={name}>{lineIcons[name] ?? <Icon n={name} s={16} />}</Tool>;
  });

const keys = [
  ["no", "F5"], ["or", "sF5", "d"], ["nc", "F6"], ["ornc", "sF6", "d"], ["coil", "F7"], ["app", "F8"], ["|", ""],
  ["h", "F9", "d"], ["v", "sF9", "d"], ["xh", "cF9", "d"], ["xv", "cF10", "d"], ["|", ""],
  ["up", "sF7"], ["dn", "sF8"], ["orup", "aF7", "d"], ["orup", "aF8", "d"],
];
const menuNames = ["工程(P)", "编辑(E)", "搜索/替换(F)", "转换(C)", "视图(V)", "在线(O)", "调试(B)", "记录(R)", "诊断(D)", "工具(T)", "窗口(W)", "帮助(H)"];

function GxWorks() {
  return (
    <Works aria-label="MELSOFT GX Works3">
      <WorksTitle><Icon n="app" s={14} /><span>MELSOFT GX Works3 (工程未设置) - [MC:N2=ON ProgPou [PRG] [LD] 监视执行中 (只读) 153步]</span></WorksTitle>
      <MenuBar>
        <MenuGrip />
        {menuNames.map((t) => <MenuBarItem key={t} $open={t === "在线(O)"}>{t}</MenuBarItem>)}
      </MenuBar>
      <ToolRow $h={26}>
        <ToolGroup $w={96}><Grip />{tools("page open save")}<Spring /><More /></ToolGroup>
        <ToolGroup $w={421}><Grip />{tools("cut copy paste undo redo | devfind greenfind ladfind greyback")}</ToolGroup>
        <ToolGroup>
          <Sep />{tools("swap orange | monplay mongrey | monplay | zin zout *fit")}
          <Combo $w={65} aria-label="缩放比例" defaultValue="67%"><option>67%</option></Combo>
          <More />
        </ToolGroup>
        <ToolGroup $w={80}><Grip />{tools("plc | play")}</ToolGroup>
      </ToolRow>
      <ToolRow $h={25}>
        <ToolGroup $w={522}><Grip />{tools("*treeico *disk2 cards | *chip | *win *win2 | bino winfind | devfind")}<Caret />{tools("*devgrid *devred *devblk | *win")}</ToolGroup>
        <ToolGroup><Sep />{tools("bluesearch g1 g2 g3")}<More /></ToolGroup>
        <ToolGroup><Grip />{tools("g4 g5 g6 g7")}<More /></ToolGroup>
      </ToolRow>
      <ToolRow $h={24} $light>
        <ToolGroup $light $w={522}>
          <Grip />
          {keys.map(([k, label, dim], i) =>
            k === "|" ? <Sep key={i} /> : (
              <KeyTool key={i} $dim={!!dim}>
                <svg width="16" height="10" viewBox="0 0 16 10"><path d={lad[k]} fill="none" stroke={dim ? "#7c8290" : "#222"} strokeWidth="1.4" /></svg>
                {label}
              </KeyTool>
            )
          )}
        </ToolGroup>
        <ToolGroup $light>{tools("l1 l2 | l1 | l3 | l4 l5 l6 l6 l7 l7 | b1 b2 *b3 b4 win")}</ToolGroup>
      </ToolRow>
      <Docks>
        <Column>
          <PanelHead><PanelTitle>导航</PanelTitle><Pin size={10} /><X size={12} /></PanelHead>
          <PanelTools>
            {tools("filt")}<Caret /><Sep />{tools("coll | gear |")}
            <Combo $w={96} aria-label="显示范围" defaultValue="全部"><option>全部</option></Combo>
          </PanelTools>
          <TreeBox>
            <TreeList>
              {tree.map(([lv, ic, t, ex], i) => (
                <TreeItem key={i} $level={lv} $sel={t === "程序本体"}>
                  {lv > 0 && (
                    <Expander $show={!!ex}>
                      <svg width="9" height="9"><path d="M0 0h9v9H0z" fill="#e8ecf4" /><path d={ex === "+" ? "M2 4.500h5M4.500 2v5" : "M2 4.500h5"} stroke="#222" /></svg>
                    </Expander>
                  )}
                  <Icon n={ic} /><NodeText $latin={/^[\w/]+$/.test(t)}>{t}</NodeText>
                </TreeItem>
              ))}
            </TreeList>
            <SideScroll><ChevronUp size={12} strokeWidth={3} /><ChevronDown size={12} strokeWidth={3} /></SideScroll>
          </TreeBox>
          <TabStrip><Tab><Icon n="conn" />连接目标</Tab><Tab $active><Icon n="navtree" />导航</Tab></TabStrip>
          <PanelHead><PanelTitle>快速搜索</PanelTitle><Pin size={10} /><X size={12} /></PanelHead>
          <SearchTarget>搜索对象: 全部(A)<Caret /></SearchTarget>
        </Column>
        <Column>
          <DocTabs>
            <DocTab $w={120}><Icon n="module" s={14} />模块配置图</DocTab>
            <DocTab $w={188} $active>ProgPou [PRG] ... <X size={12} /></DocTab>
          </DocTabs>
          <Editor>
            <GridHead>
              <HeadCell $w={108} $start>监视读取中</HeadCell>
              {["1", "2", "3", "4", "5", "6"].map((n, i) => <HeadCell key={n} $w={i % 2 ? 44 : 43}>{n}</HeadCell>)}
              <HeadCell $w={254}>7</HeadCell>
            </GridHead>
            {[1, 2, 3, 4, 5, 6, 7, 8].map((n) => (
              <LadderRow key={n}>
                <RowNo>{n}</RowNo>
                <StepCell $w={63} />
                <StepCell $w={22} $mid={n === 8}>{n === 7 && <>(15<br />)</>}{n === 6 && <>(14<br />)</>}{n === 8 && "N1"}</StepCell>
                <Rung $line={![3, 8].includes(n)} $rail={n > 6}>
                  {n === 8 ? <Coil><Icon n="coilbox" s={9} />M1</Coil> : (
                    [0, 1, 2, 3, 4, 5].map((c) => (
                      <Cell key={c}>{n === 7 && c < 2 && <>{c ? "SW0B..." : "SB49"}<Icon n="contact" s={11} /></>}</Cell>
                    ))
                  )}
                </Rung>
              </LadderRow>
            ))}
            <LadderRow $part>
              <RowNo /><StepCell $w={63} /><StepCell $w={22} />
              <Rung $rail><Cell>X102D</Cell><Cell>X1020</Cell></Rung>
            </LadderRow>
            <HScroll><ChevronLeft size={12} strokeWidth={2} /></HScroll>
          </Editor>
          <Watch />
        </Column>
      </Docks>
      <PopupMenu items={onlineMenu} x={297} y={45} w={221} rowH={21} />
      <PopupMenu items={authMenu} x={516} y={378} w={279} rowH={22} />
    </Works>
  );
}

const WatchPanel = styled.section`
  display: flex;
  flex: 1;
  flex-direction: column;
  margin-top: 5px;
`;

function Watch() {
  return (
    <WatchPanel>
      <PanelHead><PanelTitle>监看1</PanelTitle></PanelHead>
      <WatchTools>
        <WatchTool><Icon n="con" />ON</WatchTool><Sep />
        <WatchTool><Icon n="coff" />OFF</WatchTool><Sep />
        <WatchTool><Icon n="cinv" />ON/OFF反转</WatchTool><Sep />
        <WatchTool $on><Icon n="refresh" />更新</WatchTool>
      </WatchTools>
      <WatchBox>
        <WatchTable>
          <colgroup><col width="105" /><col width="142" /><col width="150" /><col width="144" /><col /></colgroup>
          <thead><tr><th>名称</th><th>当前值</th><th>显示格式</th><th>数据类型</th><th>Chinese</th></tr></thead>
          <tbody><tr><td /><td /><td /><td /><td /></tr></tbody>
        </WatchTable>
        <HScroll $thumb><ChevronLeft size={12} strokeWidth={3} /></HScroll>
      </WatchBox>
      <BottomTabs>
        <Tab><Icon n="devfind" />交叉参照1</Tab>
        <Tab><Icon n="deveye" />智能功能模块监视1</Tab>
        <Tab><Icon n="output" />输出</Tab>
        <Tab><Icon n="devdots" />软元件使用一览</Tab>
        <Tab $active><Icon n="deveye" />监看1</Tab>
      </BottomTabs>
    </WatchPanel>
  );
}

export default function App() {
  return (
    <>
      <Global />
      <Page>
        <Rule />
        <ModbusDialog />
        <GxWorks />
      </Page>
    </>
  );
}
